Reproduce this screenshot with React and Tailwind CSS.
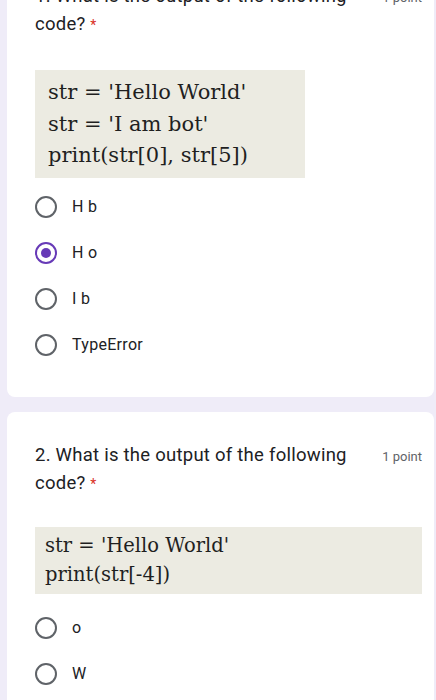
import React from 'react';

const sans = { fontFamily: 'Roboto, "Liberation Sans", sans-serif' };

function Radio({ label, checked }) {
  return (
    <div className="flex h-[46px] items-center">
      {checked ? (
        <div className="flex h-[22px] w-[22px] items-center justify-center rounded-full border-2 border-[#673ab7]">
          <div className="h-[10px] w-[10px] rounded-full bg-[#673ab7]" />
        </div>
      ) : (
        <div className="h-[22px] w-[22px] rounded-full border-2 border-[#5f6368]" />
      )}
      <span className="ml-[15px] text-[16px] tracking-[0.3px] text-[#202124]">{label}</span>
    </div>
  );
}

function Question({ num, children, options, codeClass }) {
  return (
    <div className="ml-[7px] mr-[2px] rounded-lg bg-white pl-[28px] pr-[12px] pt-[29px] pb-[29px]">
      <div className="flex items-start justify-between">
        <p className="w-[320px] text-[18.5px] leading-[28px] tracking-[0.25px] text-[#202124]">
          {num}. What is the output of the following code? <span className="text-[14px] text-[#d93025]">*</span>
        </p>
        <span className="mt-[6px] text-[13px] text-[#5f6368]">1 point</span>
      </div>
      <div className={codeClass} style={{ fontFamily: '"DejaVu Serif", serif' }}>
        {children}
      </div>
      <div className={num === 1 ? 'mt-[6px]' : 'mt-[11px]'}>
        {options.map((o) => (
          <Radio key={o.label} label={o.label} checked={o.checked} />
        ))}
      </div>
    </div>
  );
}

export default function App() {
  return (
    <div className="h-[700px] overflow-hidden bg-[#efecf8]" style={sans}>
      <div className="-mt-[47px] flex flex-col gap-[15px]">
        <Question
          num={1}
          codeClass="mt-[31px] w-[270px] bg-[#ecebe2] pl-[13px] pt-[7px] pb-[6px] text-[21px] leading-[31.5px] text-[#1f1f1f]"
          options={[
            { label: 'H b' },
            { label: 'H o', checked: true },
            { label: 'I b' },
            { label: 'TypeError' },
          ]}
        >
          <div>str = 'Hello World'</div>
          <div>str = 'I am bot'</div>
          <div>print(str[0], str[5])</div>
        </Question>
        <Question
          num={2}
          codeClass="mt-[29px] bg-[#ecebe2] pl-[10px] pt-[4px] pb-[5px] text-[19.5px] leading-[29px] text-[#1f1f1f]"
          options={[{ label: 'o' }, { label: 'W' }]}
        >
          <div>str = 'Hello World'</div>
          <div>print(str[-4])</div>
        </Question>
      </div>
    </div>
  );
}
